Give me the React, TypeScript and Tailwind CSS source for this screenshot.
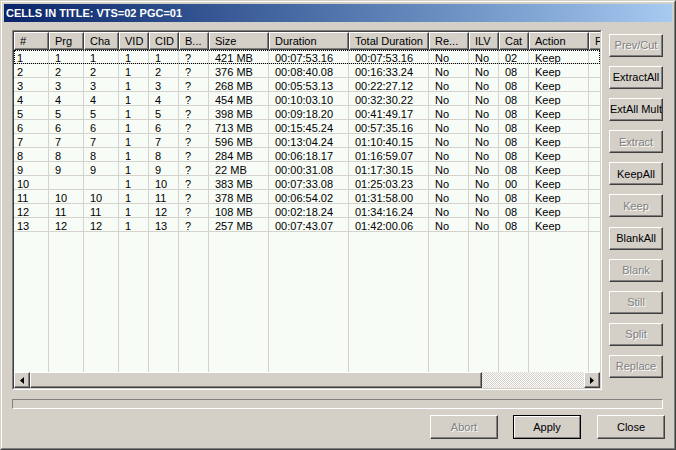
import React from 'react';

type Col = { label: string; w: string };

const cols: Col[] = [
  { label: '#', w: 'w-[35px]' },
  { label: 'Prg', w: 'w-[35px]' },
  { label: 'Cha', w: 'w-[35px]' },
  { label: 'VID', w: 'w-[30px]' },
  { label: 'CID', w: 'w-[30px]' },
  { label: 'B...', w: 'w-[30px]' },
  { label: 'Size', w: 'w-[60px]' },
  { label: 'Duration', w: 'w-[80px]' },
  { label: 'Total Duration', w: 'w-[80px]' },
  { label: 'Re...', w: 'w-[40px]' },
  { label: 'ILV', w: 'w-[30px]' },
  { label: 'Cat', w: 'w-[30px]' },
  { label: 'Action', w: 'w-[60px]' },
  { label: 'F', w: 'w-[60px]' },
];

const rows: string[][] = [
  ['1', '1', '1', '1', '1', '?', '421 MB', '00:07:53.16', '00:07:53.16', 'No', 'No', '02', 'Keep', ''],
  ['2', '2', '2', '1', '2', '?', '376 MB', '00:08:40.08', '00:16:33.24', 'No', 'No', '08', 'Keep', ''],
  ['3', '3', '3', '1', '3', '?', '268 MB', '00:05:53.13', '00:22:27.12', 'No', 'No', '08', 'Keep', ''],
  ['4', '4', '4', '1', '4', '?', '454 MB', '00:10:03.10', '00:32:30.22', 'No', 'No', '08', 'Keep', ''],
  ['5', '5', '5', '1', '5', '?', '398 MB', '00:09:18.20', '00:41:49.17', 'No', 'No', '08', 'Keep', ''],
  ['6', '6', '6', '1', '6', '?', '713 MB', '00:15:45.24', '00:57:35.16', 'No', 'No', '08', 'Keep', ''],
  ['7', '7', '7', '1', '7', '?', '596 MB', '00:13:04.24', '01:10:40.15', 'No', 'No', '08', 'Keep', ''],
  ['8', '8', '8', '1', '8', '?', '284 MB', '00:06:18.17', '01:16:59.07', 'No', 'No', '08', 'Keep', ''],
  ['9', '9', '9', '1', '9', '?', '22 MB', '00:00:31.08', '01:17:30.15', 'No', 'No', '08', 'Keep', ''],
  ['10', '', '', '1', '10', '?', '383 MB', '00:07:33.08', '01:25:03.23', 'No', 'No', '00', 'Keep', ''],
  ['11', '10', '10', '1', '11', '?', '378 MB', '00:06:54.02', '01:31:58.00', 'No', 'No', '08', 'Keep', ''],
  ['12', '11', '11', '1', '12', '?', '108 MB', '00:02:18.24', '01:34:16.24', 'No', 'No', '08', 'Keep', ''],
  ['13', '12', '12', '1', '13', '?', '257 MB', '00:07:43.07', '01:42:00.06', 'No', 'No', '08', 'Keep', ''],
];

const sideButtons: { label: string; disabled?: boolean }[] = [
  { label: 'Prev/Cut', disabled: true },
  { label: 'ExtractAll' },
  { label: 'ExtAll Mult' },
  { label: 'Extract', disabled: true },
  { label: 'KeepAll' },
  { label: 'Keep', disabled: true },
  { label: 'BlankAll' },
  { label: 'Blank', disabled: true },
  { label: 'Still', disabled: true },
  { label: 'Split', disabled: true },
  { label: 'Replace', disabled: true },
];

const raised =
  'bg-[#d4d0c8] border border-t-white border-l-white border-r-[#404040] border-b-[#404040] shadow-[inset_-1px_-1px_0_#808080]';

function WinButton({ label, disabled, className }: { label: string; disabled?: boolean; className: string }) {
  return (
    <div
      className={`${raised} ${className} flex items-center justify-center whitespace-nowrap overflow-hidden text-[11px] ${
        disabled ? 'text-[#808080] [text-shadow:1px_1px_0_#ffffff]' : 'text-black'
      }`}
    >
      {label}
    </div>
  );
}

function Arrow({ dir }: { dir: 'left' | 'right' }) {
  return (
    <div className={`${raised} w-[16px] h-[16px] shrink-0 flex items-center justify-center`}>
      <svg width="4" height="7" viewBox="0 0 4 7">
        {dir === 'left' ? <polygon points="4,0 4,7 0,3.5" fill="#000" /> : <polygon points="0,0 0,7 4,3.5" fill="#000" />}
      </svg>
    </div>
  );
}

export default function App() {
  return (
    <div className="w-[676px] h-[450px] bg-[#d4d0c8] border border-t-[#d4d0c8] border-l-[#d4d0c8] border-r-[#404040] border-b-[#404040] font-['Liberation_Sans',Arial,sans-serif] text-[11px] text-black select-none">
      <div className="h-full border border-t-white border-l-white border-r-[#808080] border-b-[#808080] p-[2px] flex flex-col">
        {/* Title bar */}
        <div className="h-[18px] shrink-0 bg-linear-to-r from-[#0a246a] to-[#a6caf0] flex items-center pl-[2px]">
          <span className="text-white font-bold text-[11px] leading-none">CELLS IN TITLE: VTS=02 PGC=01</span>
        </div>

        {/* Content */}
        <div className="flex-1 flex flex-col pl-[8px] pt-[8px]">
          <div className="flex gap-[7px]">
            {/* List view */}
            <div className="w-[590px] h-[360px] border border-t-[#808080] border-l-[#808080] border-b-white border-r-white">
              <div className="h-full border border-t-[#404040] border-l-[#404040] border-b-[#d4d0c8] border-r-[#d4d0c8] flex flex-col overflow-hidden bg-[#f7fcf7]">
                {/* Header */}
                <div className="h-[18px] shrink-0 flex">
                  {cols.map((c) => (
                    <div
                      key={c.label}
                      className={`${c.w} shrink-0 h-full ${raised} flex items-center pl-[5px] whitespace-nowrap overflow-hidden`}
                    >
                      {c.label}
                    </div>
                  ))}
                </div>

                {/* Rows */}
                <div className="flex-1 flex flex-col overflow-hidden">
                  {rows.map((r, i) => (
                    <div
                      key={i}
                      className={`h-[14px] shrink-0 flex border-b border-[#d6d3ce] ${
                        i === 0 ? 'outline-1 outline-dotted outline-black -outline-offset-1' : ''
                      }`}
                    >
                      {r.map((v, j) => (
                        <div
                          key={j}
                          className={`${cols[j].w} shrink-0 h-full border-r border-[#d6d3ce] leading-[14px] pt-[1px] whitespace-nowrap overflow-hidden ${
                            j === 0 ? 'pl-[3px]' : 'pl-[6px]'
                          }`}
                        >
                          {v}
                        </div>
                      ))}
                    </div>
                  ))}
                  <div className="flex-1 flex">
                    {cols.map((c) => (
                      <div key={c.label} className={`${c.w} shrink-0 h-full border-r border-[#d6d3ce]`} />
                    ))}
                  </div>
                </div>

                {/* Horizontal scrollbar */}
                <div className="h-[16px] shrink-0 flex">
                  <Arrow dir="left" />
                  <div className={`${raised} w-[452px] h-full shrink-0`} />
                  <div className="flex-1 h-full bg-[repeating-conic-gradient(#ffffff_0%_25%,#d4d0c8_0%_50%)] bg-[length:2px_2px]" />
                  <Arrow dir="right" />
                </div>
              </div>
            </div>

            {/* Side buttons */}
            <div className="w-[54px] h-[348px] pt-[4px] flex flex-col justify-between">
              {sideButtons.map((b) => (
                <WinButton key={b.label} label={b.label} disabled={b.disabled} className="w-[54px] h-[23px]" />
              ))}
            </div>
          </div>

          {/* Progress bar */}
          <div className="mt-[9px] w-[651px] h-[10px] border border-t-[#808080] border-l-[#808080] border-b-white border-r-white" />

          {/* Bottom buttons */}
          <div className="mt-[6px] flex pl-[418px]">
            <WinButton label="Abort" disabled className="w-[68px] h-[24px]" />
            <div className="ml-[15px] w-[68px] h-[24px] border border-black">
              <div className="w-full h-full bg-[#d4d0c8] border border-t-white border-l-white border-r-[#808080] border-b-[#808080] flex items-center justify-center text-[11px]">
                Apply
              </div>
            </div>
            <WinButton label="Close" className="ml-[16px] w-[68px] h-[24px]" />
          </div>
        </div>
      </div>
    </div>
  );
}
